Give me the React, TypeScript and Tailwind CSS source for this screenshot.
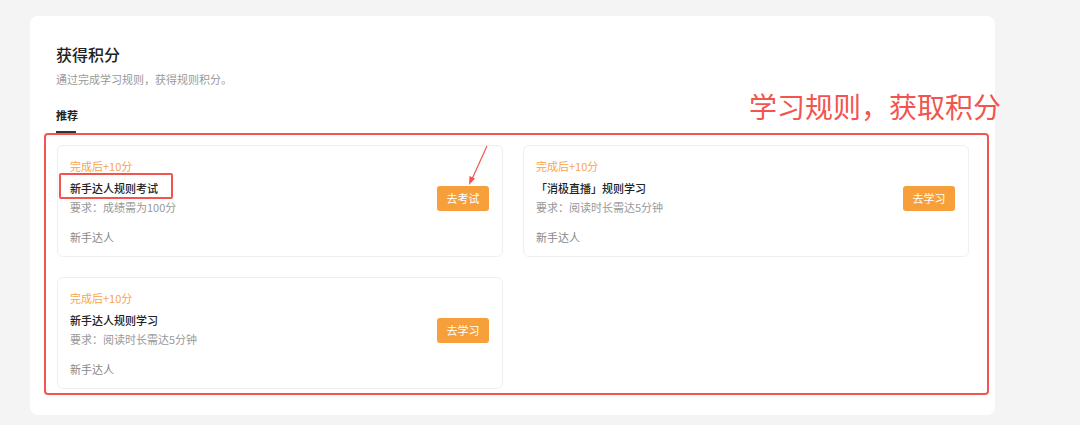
const font = { fontFamily: '"Noto Sans CJK SC", "Noto Sans", sans-serif' }

type Task = {
  title: string
  req: string
  action: string
}

const tasks: Task[] = [
  { title: '新手达人规则考试', req: '要求：成绩需为100分', action: '去考试' },
  { title: '「消极直播」规则学习', req: '要求：阅读时长需达5分钟', action: '去学习' },
  { title: '新手达人规则学习', req: '要求：阅读时长需达5分钟', action: '去学习' },
]

function TaskCard({ task }: { task: Task }) {
  return (
    <div className="flex h-[112px] w-[446px] items-center justify-between rounded-md border border-[#efefef] bg-white pl-[12px] pr-[13px]">
      <div className="flex flex-col pt-px">
        <div className="text-[11px] leading-[18px] text-[#f7a54a]">完成后+10分</div>
        <div className="mt-[4px] text-[11px] leading-[18px] font-medium text-[#222]">{task.title}</div>
        <div className="mt-px text-[11px] leading-[18px] text-[#999]">{task.req}</div>
        <div className="mt-[12px] text-[11px] leading-[18px] text-[#888]">新手达人</div>
      </div>
      <button className="mb-[5px] flex h-[25px] w-[52px] items-center justify-center rounded-[3px] bg-[#f79f3a] text-[11px] text-white">
        {task.action}
      </button>
    </div>
  )
}

export default function App() {
  return (
    <div className="relative h-[425px] w-[1080px] overflow-hidden bg-[#f4f4f4] pt-[16px] pl-[30px]" style={font}>
      <div className="h-[399px] w-[965px] rounded-lg bg-white pt-[26px] pl-[26px]">
        <h2 className="text-[16px] leading-[24px] font-medium text-[#222]">获得积分</h2>
        <p className="mt-[3px] text-[11px] leading-[20px] text-[#999]">通过完成学习规则，获得规则积分。</p>
        <div className="mt-[17px] inline-flex flex-col">
          <span className="text-[11px] leading-[18px] font-bold text-[#222]">推荐</span>
          <span className="mt-[7px] h-[3px] w-[20px] bg-[#333]" />
        </div>
        <div className="mt-[11px] ml-px grid w-[912px] grid-cols-[446px_446px] gap-x-[20px] gap-y-[20px]">
          {tasks.map((t) => (
            <TaskCard key={t.title} task={t} />
          ))}
        </div>
      </div>

      {/* annotations */}
      <div className="absolute top-[133px] left-[44px] h-[262px] w-[945px] rounded-[4px] border-2 border-[#f2554f]" />
      <div className="absolute top-[173px] left-[59px] h-[26px] w-[114px] rounded-[2px] border-2 border-[#f2554f]" />
      <div className="absolute top-[88px] left-[749px] text-[28px] leading-[36px] text-[#f2554f]">学习规则，获取积分</div>
      <svg className="absolute top-[143px] left-[462px]" width="30" height="46" viewBox="0 0 30 46">
        <line x1="25" y1="3" x2="10" y2="36" stroke="#f2554f" strokeWidth="1.2" />
        <polygon points="7,42 7.5,33 13,35.5" fill="#f2554f" />
      </svg>
    </div>
  )
}
